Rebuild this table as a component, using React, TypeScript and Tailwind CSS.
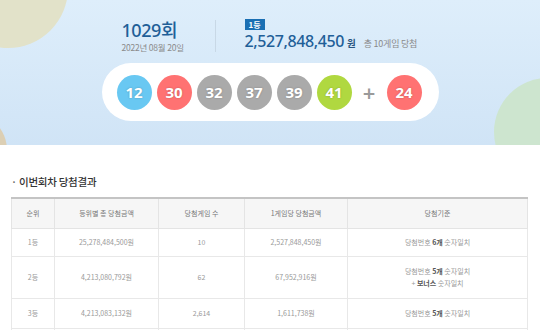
import type { ReactNode } from "react";

const balls = [
  { n: 12, c: "bg-[#69c8f2]" },
  { n: 30, c: "bg-[#ff7272]" },
  { n: 32, c: "bg-[#aaaaaa]" },
  { n: 37, c: "bg-[#aaaaaa]" },
  { n: 39, c: "bg-[#aaaaaa]" },
  { n: 41, c: "bg-[#b0d840]" },
];

type Row = { rank: string; total: string; games: string; each: string; rule: ReactNode; h: string };

const rows: Row[] = [
  {
    rank: "1등",
    total: "25,278,484,500원",
    games: "10",
    each: "2,527,848,450원",
    rule: (
      <>
        당첨번호 <b className="font-bold text-[#555]">6개</b> 숫자일치
      </>
    ),
    h: "h-[28px]",
  },
  {
    rank: "2등",
    total: "4,213,080,792원",
    games: "62",
    each: "67,952,916원",
    rule: (
      <>
        당첨번호 <b className="font-bold text-[#555]">5개</b> 숫자일치
        <br />+ <b className="font-bold text-[#555]">보너스</b> 숫자일치
      </>
    ),
    h: "h-[42px]",
  },
  {
    rank: "3등",
    total: "4,213,083,132원",
    games: "2,614",
    each: "1,611,738원",
    rule: (
      <>
        당첨번호 <b className="font-bold text-[#555]">5개</b> 숫자일치
      </>
    ),
    h: "h-[30px]",
  },
];

function Ball({ n, c }: { n: number; c: string }) {
  return (
    <div
      className={`${c} w-[35px] h-[35px] rounded-full flex items-center justify-center text-white text-[15px] font-bold [text-shadow:0_0_2px_rgba(0,0,0,0.25)]`}
    >
      {n}
    </div>
  );
}

export default function App() {
  return (
    <div className="w-[540px] h-[330px] overflow-hidden bg-white font-['Noto_Sans','Noto_Sans_CJK_KR',sans-serif]">
      {/* 상단 배너 */}
      <div className="relative h-[145px] overflow-hidden bg-gradient-to-b from-[#deeefb] to-[#d0e4f6]">
        <div className="absolute -left-[52px] -top-[72px] w-[120px] h-[120px] rounded-full bg-[#e2e2c9]" />
        <div className="absolute -left-[67px] top-[113px] w-[74px] h-[74px] rounded-full bg-[#dccfb4]" />
        <div className="absolute left-[494px] top-[78px] w-[108px] h-[108px] rounded-full bg-[#cde5cf]" />

        <div className="relative flex flex-col items-center">
          <div className="w-[337px] mt-[18px] pl-[20px] flex items-center">
            <div className="flex flex-col w-[64px]">
              <div className="text-[18px] leading-[22px] text-[#1f5f98] font-medium tracking-tight">
                1029<span className="font-['Noto_Sans_CJK_KR'] font-medium">회</span>
              </div>
              <div className="text-[8.5px] leading-[12px] text-[#8a8a8a] font-['Noto_Sans_CJK_KR'] tracking-tight whitespace-nowrap">
                2022년 08월 20일
              </div>
            </div>
            <div className="w-px h-[32px] bg-[#c8d8e6] ml-[29px] mr-[29px]" />
            <div className="flex flex-col items-start">
              <div className="bg-[#1a6fb3] text-white text-[8px] leading-[11px] px-[4px] font-bold font-['Noto_Sans_CJK_KR']">
                1등
              </div>
              <div className="flex items-baseline mt-[1px]">
                <span className="text-[16px] leading-[21px] text-[#1f5f98] font-medium tracking-[-0.4px]">
                  2,527,848,450
                </span>
                <span className="ml-[3px] text-[9.5px] font-bold text-[#2a5680] font-['Noto_Sans_CJK_KR']">원</span>
                <span className="ml-[8px] text-[9px] text-[#8a8a8a] font-['Noto_Sans_CJK_KR'] tracking-tight">
                  총 10게임 당첨
                </span>
              </div>
            </div>
          </div>

          <div className="w-[337px] h-[58px] mt-[10px] bg-white rounded-full flex items-center gap-[5px] pl-[15px]">
            {balls.map((b) => (
              <Ball key={b.n} n={b.n} c={b.c} />
            ))}
            <div className="w-[25px] flex items-center justify-center text-[22px] leading-none font-semibold text-[#9a9a9a]">
              +
            </div>
            <Ball n={24} c="bg-[#ff7272]" />
          </div>
        </div>
      </div>

      {/* 당첨결과 */}
      <div className="px-[11px] pt-[30px] font-['Noto_Sans_CJK_KR',sans-serif]">
        <h3 className="flex items-center text-[10.5px] leading-[14px] font-medium text-[#333] tracking-tight">
          <span className="w-[8px] text-[#666]">·</span>이번회차 당첨결과
        </h3>

        <table className="mt-[8px] w-[516px] table-fixed border-collapse text-[7px] text-[#999] text-center">
          <colgroup>
            <col className="w-[43px]" />
            <col className="w-[104px]" />
            <col className="w-[86px]" />
            <col className="w-[103px]" />
            <col className="w-[180px]" />
          </colgroup>
          <thead>
            <tr className="h-[30px] bg-[#f6f6f6] text-[#777]">
              <th className="font-normal border border-[#e4e4e4] border-t-[#c4c4c4] border-t-2">순위</th>
              <th className="font-normal border border-[#e4e4e4] border-t-[#c4c4c4] border-t-2">등위별 총 당첨금액</th>
              <th className="font-normal border border-[#e4e4e4] border-t-[#c4c4c4] border-t-2">당첨게임 수</th>
              <th className="font-normal border border-[#e4e4e4] border-t-[#c4c4c4] border-t-2">1게임당 당첨금액</th>
              <th className="font-normal border border-[#e4e4e4] border-t-[#c4c4c4] border-t-2">당첨기준</th>
            </tr>
          </thead>
          <tbody>
            {rows.map((r) => (
              <tr key={r.rank} className={r.h}>
                <td className="border border-[#e8e8e8]">{r.rank}</td>
                <td className="border border-[#e8e8e8]">{r.total}</td>
                <td className="border border-[#e8e8e8]">{r.games}</td>
                <td className="border border-[#e8e8e8]">{r.each}</td>
                <td className="border border-[#e8e8e8] leading-[12px]">{r.rule}</td>
              </tr>
            ))}
            <tr className="h-[20px]">
              <td className="border border-[#e8e8e8]" />
              <td className="border border-[#e8e8e8]" />
              <td className="border border-[#e8e8e8]" />
              <td className="border border-[#e8e8e8]" />
              <td className="border border-[#e8e8e8]" />
            </tr>
          </tbody>
        </table>
      </div>
    </div>
  );
}
